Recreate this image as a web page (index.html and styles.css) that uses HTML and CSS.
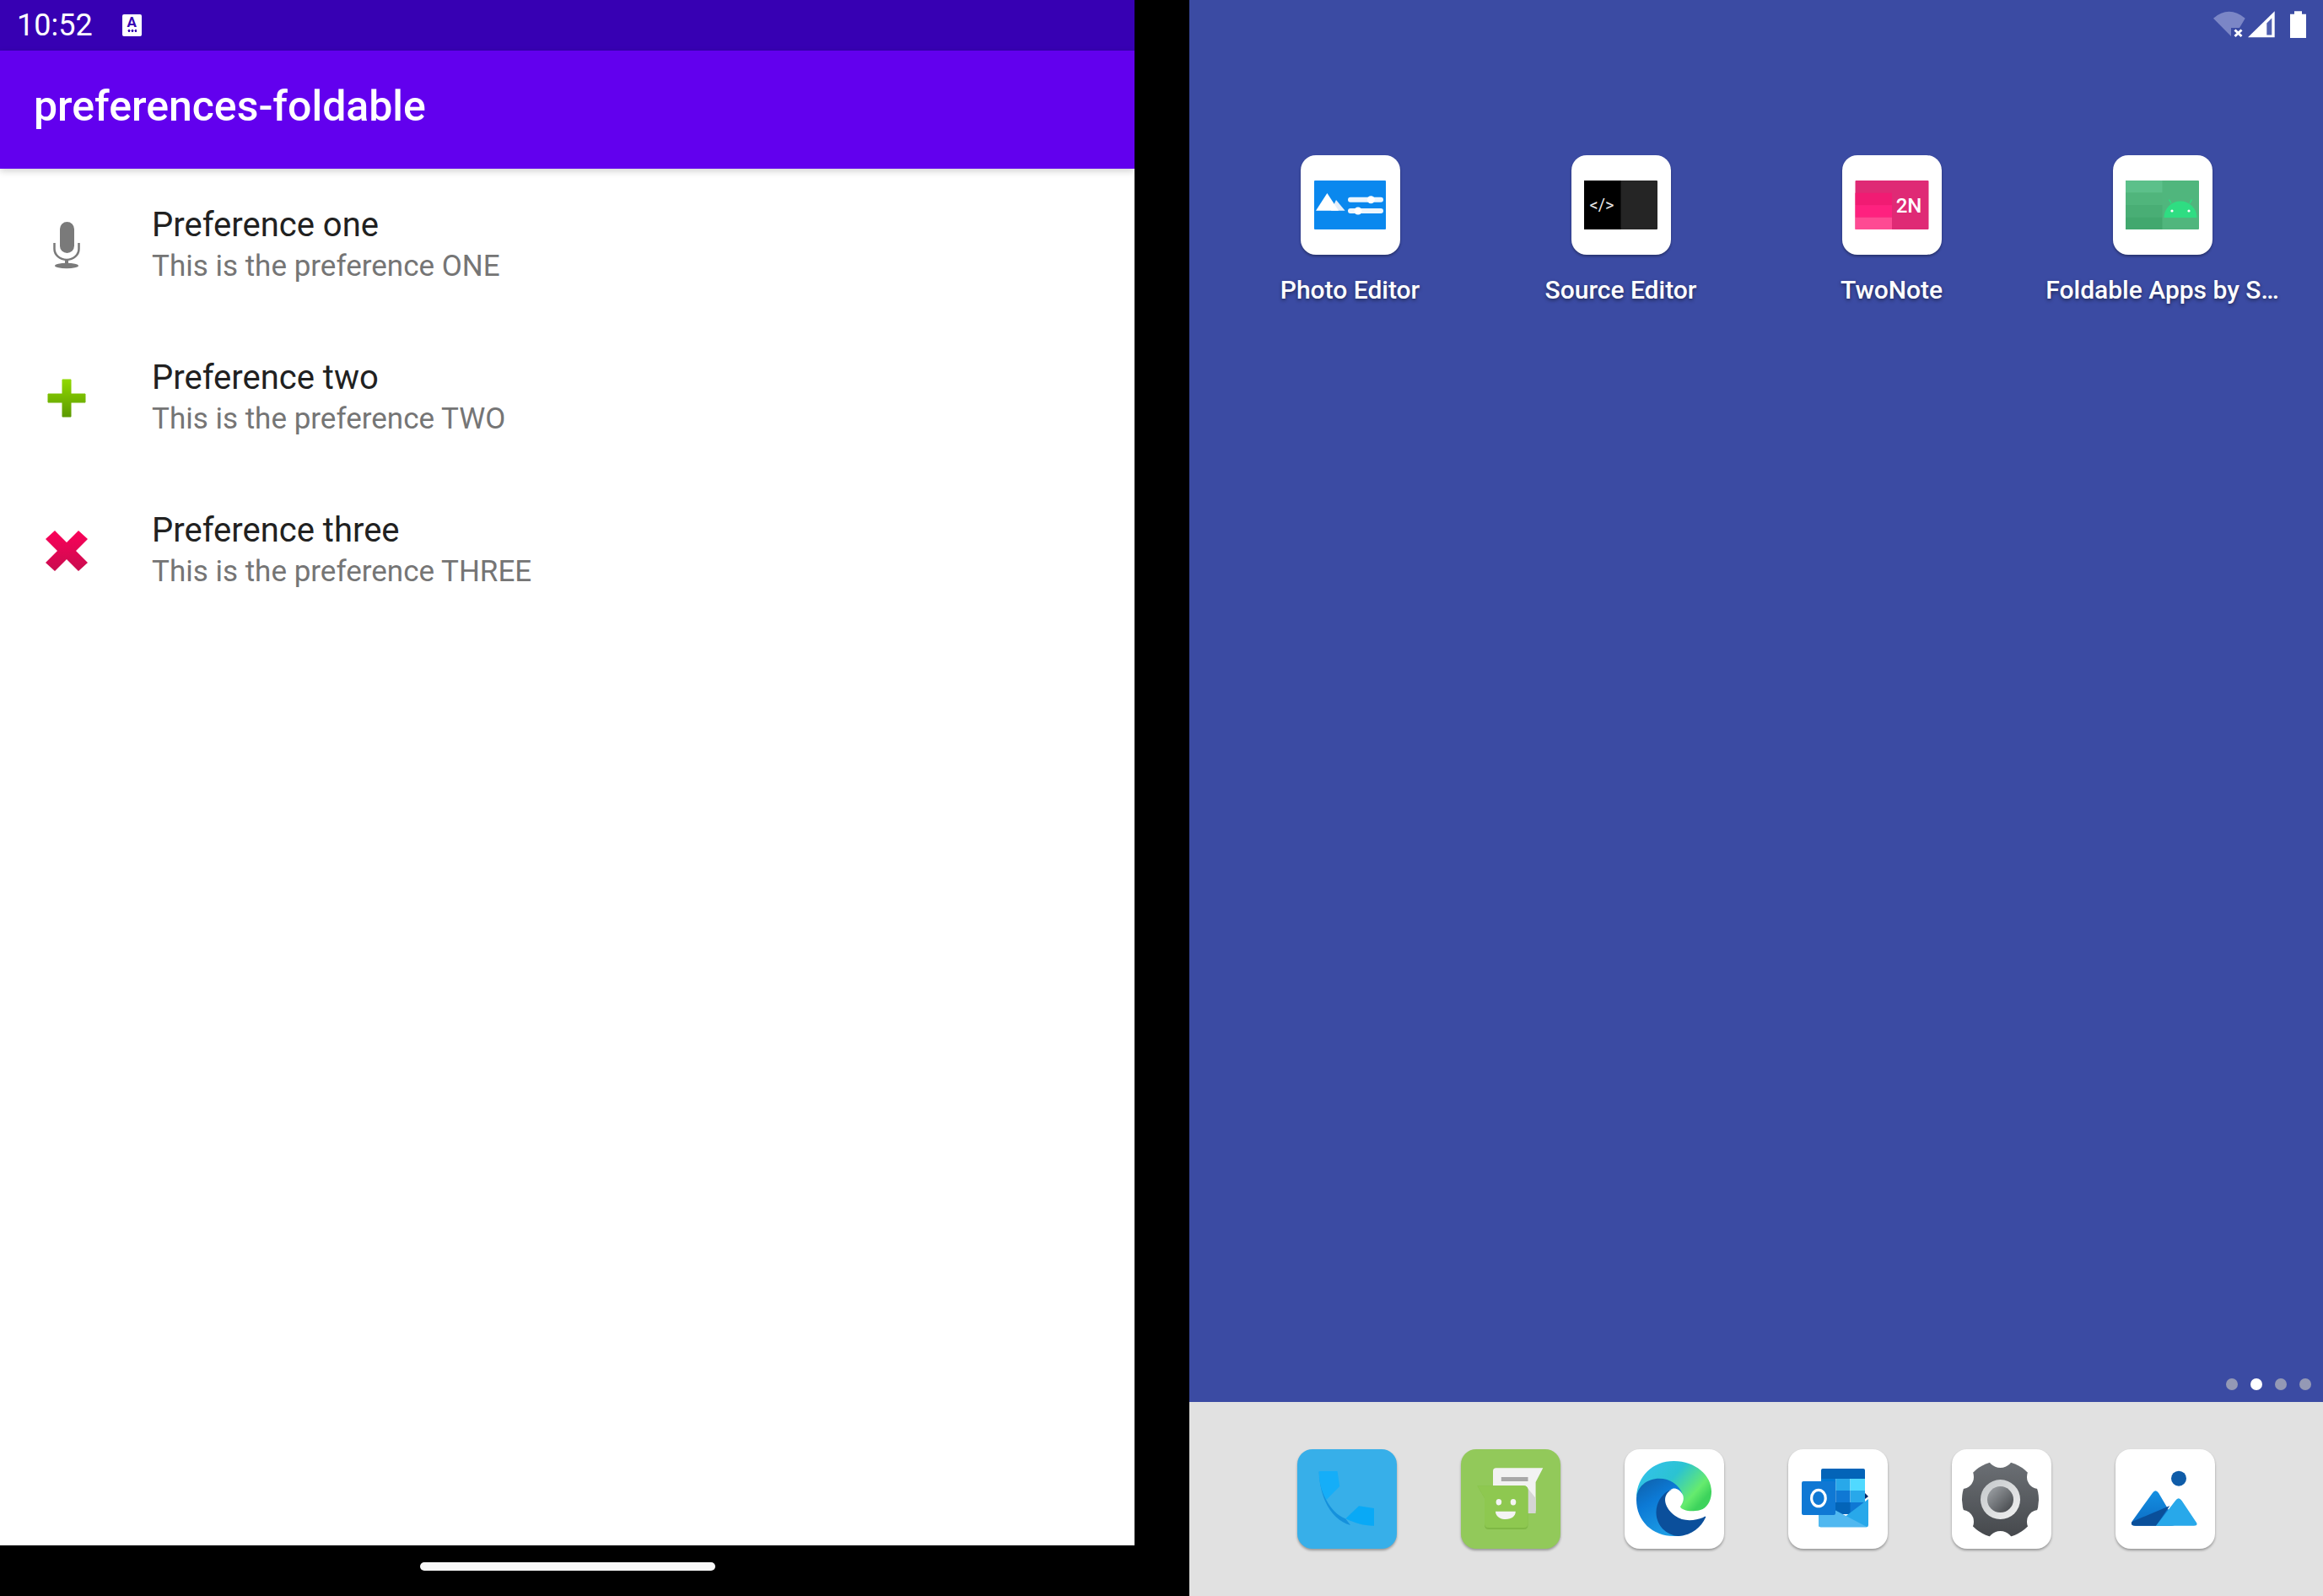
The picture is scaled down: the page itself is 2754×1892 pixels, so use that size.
FILE: index.html
```html
<!DOCTYPE html>
<html lang="en">
<head>
<meta charset="utf-8">
<title>preferences-foldable</title>
<link rel="stylesheet" href="styles.css">
</head>
<body>
<svg class="defs" width="0" height="0" aria-hidden="true">
  <defs>
    <linearGradient id="plusG" x1="0" y1="0" x2="0" y2="1"><stop offset="0" stop-color="#90d800"/><stop offset="1" stop-color="#5c9a00"/></linearGradient>
    <linearGradient id="crossG" x1="0" y1="0" x2="0" y2="1"><stop offset="0" stop-color="#fb0059"/><stop offset="1" stop-color="#c90d4f"/></linearGradient>
    <linearGradient id="edgeTop" x1="0" y1="0" x2="1" y2="0.6"><stop offset="0" stop-color="#35c1f1"/><stop offset=".5" stop-color="#2bc3d2"/><stop offset=".85" stop-color="#66eb6e"/><stop offset="1" stop-color="#3dd35c"/></linearGradient>
    <linearGradient id="edgeMid" x1="0" y1="0" x2=".5" y2="1"><stop offset="0" stop-color="#0f5fa8"/><stop offset=".45" stop-color="#0c7ad6"/><stop offset="1" stop-color="#1c9be4"/></linearGradient>
    <linearGradient id="gearG" x1="0" y1="0" x2="0" y2="1"><stop offset="0" stop-color="#6c7075"/><stop offset="1" stop-color="#45484c"/></linearGradient>
    <linearGradient id="ringG" x1="0" y1="0" x2="1" y2="1"><stop offset="0" stop-color="#c2c6c9"/><stop offset="1" stop-color="#f2f2f2"/></linearGradient>
    <linearGradient id="hubG" x1="0" y1="0" x2="1" y2="1"><stop offset="0" stop-color="#a2a6aa"/><stop offset="1" stop-color="#3f4246"/></linearGradient>
    <linearGradient id="mtG" x1="0" y1="0" x2="0" y2="1"><stop offset="0" stop-color="#1490e2"/><stop offset="1" stop-color="#0c6cc4"/></linearGradient>
  </defs>
</svg>
<main class="device">
  <section class="app">
    <header class="status-left">
      <span class="clock">10:52</span>
      <span class="ime"><span class="ime-a">A</span><span class="ime-dots"></span></span>
    </header>
    <div class="appbar">preferences-foldable</div>
    <ul class="prefs">
      <li class="pref">
        <span class="pref-icon">
          <svg width="60" height="60" viewBox="0 0 60 60"><rect x="22" y="2" width="17" height="37" rx="8.5" fill="#7a7a7a"/><path d="M15.500 27v7a14.500 13 0 0 0 29 0v-7" fill="none" stroke="#7a7a7a" stroke-width="2.500"/><rect x="28" y="46" width="4" height="7" fill="#7a7a7a"/><ellipse cx="30" cy="54" rx="14" ry="3.200" fill="#7a7a7a"/></svg>
        </span>
        <div class="pref-text"><div class="pref-title">Preference one</div><div class="pref-sub">This is the preference ONE</div></div>
      </li>
      <li class="pref">
        <span class="pref-icon">
          <svg width="60" height="60" viewBox="0 0 60 60"><path d="M25 8h10v17h17v10H35v17H25V35H8V25h17z" fill="url(#plusG)" stroke="url(#plusG)" stroke-width="1" stroke-linejoin="round"/></svg>
        </span>
        <div class="pref-text"><div class="pref-title">Preference two</div><div class="pref-sub">This is the preference TWO</div></div>
      </li>
      <li class="pref">
        <span class="pref-icon">
          <svg width="60" height="60" viewBox="0 0 60 60"><path d="M16 6L30 20 44 6l11 10-14 14 14 14-11 10-14-14-14 14L5 44l14-14L5 16z" fill="url(#crossG)"/></svg>
        </span>
        <div class="pref-text"><div class="pref-title">Preference three</div><div class="pref-sub">This is the preference THREE</div></div>
      </li>
    </ul>
    <footer class="navbar"><span class="handle"></span></footer>
  </section>

  <div class="hinge"></div>

  <section class="launcher">
    <div class="status-right">
      <svg width="120" height="40" viewBox="0 0 120 40">
        <path d="M4 11.700Q22.500-4 41.700 11.700L35 23H25v10z" fill="#7b86c6"/>
        <path d="M29.500 25.500l8 7.500m0-7.500l-8 7.500" stroke="#fff" stroke-width="3"/>
        <path d="M45 34.300L76.700 3.300v31z" fill="#fff"/>
        <path d="M67.300 17.500l6-6v20h-6z" fill="#4f5fb0"/>
        <path d="M100 3.300h9v3.400h5V35H95V6.700h5z" fill="#fff"/>
      </svg>
    </div>

    <div class="apps">
      <div class="app-cell">
        <span class="tile white">
          <svg width="118" height="118" viewBox="0 0 118 118">
            <rect x="16" y="30" width="85" height="58" rx="1" fill="#0a88ee"/>
            <path d="M42 53l10.600 12.700H36z" fill="#e4eefa"/>
            <path d="M18 65.700L31.400 45 45 65.700z" fill="#fff"/>
            <path d="M59 52.700h36M59 66h36" stroke="#fff" stroke-width="6" stroke-linecap="round" opacity=".92"/>
            <circle cx="83.300" cy="52.700" r="4.500" fill="#fff"/><circle cx="68" cy="66" r="4.500" fill="#fff"/>
          </svg>
        </span>
        <span class="app-label">Photo Editor</span>
      </div>
      <div class="app-cell">
        <span class="tile white">
          <svg width="118" height="118" viewBox="0 0 118 118">
            <rect x="15" y="30" width="87" height="58" rx="1" fill="#252525"/>
            <path d="M15 30h43.500v58H15z" fill="#000"/>
            <text class="glyph-code" x="36" y="66" text-anchor="middle">&lt;/&gt;</text>
          </svg>
        </span>
        <span class="app-label">Source Editor</span>
      </div>
      <div class="app-cell">
        <span class="tile white">
          <svg width="118" height="118" viewBox="0 0 118 118">
            <rect x="15.500" y="30" width="87" height="58" rx="1" fill="#df2a75"/>
            <rect x="15.500" y="44.700" width="43.500" height="14.500" fill="#f11b73"/>
            <rect x="15.500" y="59.200" width="43.500" height="14.500" fill="#fe217f"/>
            <rect x="15.500" y="73.700" width="43.500" height="14.300" fill="#fe4a93"/>
            <text class="glyph-2n" x="79" y="67.500" text-anchor="middle">2N</text>
          </svg>
        </span>
        <span class="app-label">TwoNote</span>
      </div>
      <div class="app-cell">
        <span class="tile white">
          <svg width="118" height="118" viewBox="0 0 118 118">
            <rect x="15" y="30" width="87" height="58" rx="1" fill="#50b67d"/>
            <rect x="15" y="30" width="43.500" height="14.500" fill="#5cc08a"/>
            <rect x="15" y="44.500" width="43.500" height="14.500" fill="#50b57c"/>
            <rect x="15" y="59" width="43.500" height="14.500" fill="#49ae75"/>
            <rect x="15" y="73.500" width="43.500" height="14.500" fill="#42a86e"/>
            <path d="M60.500 74a19.500 19.500 0 0 1 39 0z" fill="#2fdd82"/>
            <path d="M69 57l-2.500-4.500M91 57l2.500-4.500" stroke="#2fdd82" stroke-width="1.500"/>
            <circle cx="70" cy="66" r="1.600" fill="#fff"/><circle cx="90" cy="66" r="1.600" fill="#fff"/>
          </svg>
        </span>
        <span class="app-label">Foldable Apps by S…</span>
      </div>
    </div>

    <div class="pager">
      <span class="dot"></span><span class="dot on"></span><span class="dot"></span><span class="dot"></span>
    </div>

    <nav class="dock">
      <span class="tile blue">
        <svg width="118" height="118" viewBox="0 0 118 118">
          <path d="M34.400 60L57.300 82.300 73 67.300 50 44z" fill="none"/>
          <path d="M34 59.500C40 71 47 78 57.300 82.500L63 90C44 85 27 64 25.700 26z" fill="#1591dc"/>
          <path d="M25.700 27Q25.700 26 27 26H47.500L50.200 44 34.400 60C28 49 25.700 38 25.700 27z" fill="#15aef8"/>
          <path d="M57.300 82.300L73 67.300 91 70V90.700C80 91 69 88 57.300 82.300z" fill="#09a9f6"/>
        </svg>
      </span>
      <span class="tile green">
        <svg width="118" height="118" viewBox="0 0 118 118">
          <path d="M38 26q0-3.700 3.700-3.700H97.300L88.600 39V72q0 4-4 4H38z" fill="#f2f2f2"/>
          <rect x="47.800" y="33" width="31.700" height="5" fill="#a8a8a8"/>
          <path d="M76.800 43.300L88.600 58V76H79.500V49z" fill="#d5d5d5"/>
          <path d="M19.400 43.300H74q5.500 0 5.500 5.500V90q0 5-5 5H33q-5 0-5-5V58z" fill="#7fb845"/>
          <path d="M19.400 43.300H74q5.500 0 5.500 5.500V88q0 5-5 5H33q-5 0-5-5V58z" fill="#8ec850"/>
          <ellipse cx="44.900" cy="62.700" rx="3.300" ry="3.700" fill="#f4f4f4"/><ellipse cx="62" cy="62.700" rx="3.300" ry="3.700" fill="#f4f4f4"/>
          <path d="M41 73.700H64.800C64.800 79 60 83 53 83S41 79 41 73.700z" fill="#f4f4f4"/>
        </svg>
      </span>
      <span class="tile white">
        <svg width="118" height="118" viewBox="0 0 118 118">
          <path d="M14 57C15 32 33 14 58.500 14 84 14 103 31 103 50 103 63 96 73 84 73 76 74 67 72 66 68 69 64 71 59 69 54 65 45 55 43 46 46 30 42 17 46 14 57z" fill="url(#edgeTop)"/>
          <path d="M14 60C14 44 27 34.700 41 34.700 54 34.700 65 42 69 54 66 48 61 46 57.600 46.600 48 50 43 60 45 72 47 86 57 98 70 102 66 103 62 103 58.500 103 33 103 14 85 14 60z" fill="url(#edgeMid)"/>
          <path d="M57.600 47C47 50 37 61 37.500 76 38 90 49 102 64 103 80 102 91 92 96 81 97 79 95 79.500 93 81 83 85 69 86 60 79 50 72 45 61 50 53 52 50 55 48 57.600 47z" fill="#0b4f9b"/>
        </svg>
      </span>
      <span class="tile white">
        <svg width="118" height="118" viewBox="0 0 118 118">
          <path d="M39 25q0-2 2-2h48q2 0 2 2v10H39z" fill="#0364b8"/>
          <rect x="39" y="35" width="17.500" height="14" fill="#0078d4"/><rect x="56.500" y="35" width="17" height="14" fill="#28a8ea"/><rect x="73.500" y="35" width="17.500" height="14" fill="#50d9ff"/>
          <rect x="39" y="49" width="17.500" height="14" fill="#0364b8"/><rect x="56.500" y="49" width="17" height="14" fill="#0f78d4"/><rect x="73.500" y="49" width="17.500" height="14" fill="#28a8ea"/>
          <rect x="39" y="63" width="35" height="14" fill="#0364b8"/><path d="M73.500 63H91V70L73.500 79z" fill="#0f78d4"/>
          <path d="M91 52l4 4-4 3z" fill="#0a2767"/>
          <path d="M36 62L66 81 95 59V90q0 2.300-2.300 2.300H38.300Q36 92.300 36 90z" fill="#28a8ea"/>
          <path d="M36 62L93.700 92.300H38.300Q36 92.300 36 90z" fill="#50b8f0"/>
          <rect x="16" y="38" width="40" height="40" rx="2" fill="#0f78d4"/>
          <ellipse cx="35.900" cy="58" rx="8.300" ry="9.700" fill="none" stroke="#fff" stroke-width="3.200"/>
        </svg>
      </span>
      <span class="tile white">
        <svg width="118" height="118" viewBox="0 0 118 118">
          <circle cx="57.500" cy="59.600" r="45.500" fill="url(#gearG)"/>
          <circle cx="57.500" cy="6" r="16" fill="#fff"/><circle cx="57.500" cy="113" r="16" fill="#fff"/>
          <circle cx="103" cy="33" r="14" fill="#fff"/><circle cx="12" cy="33" r="14" fill="#fff"/>
          <circle cx="103" cy="86" r="14" fill="#fff"/><circle cx="12" cy="86" r="14" fill="#fff"/>
          <circle cx="57.500" cy="59.600" r="23.500" fill="url(#ringG)"/>
          <circle cx="57.500" cy="59.600" r="15.500" fill="url(#hubG)"/>
        </svg>
      </span>
      <span class="tile white">
        <svg width="118" height="118" viewBox="0 0 118 118">
          <circle cx="75" cy="34.700" r="9" fill="#0f5ca8"/>
          <path d="M43.800 52Q47.500 46.500 51.200 52L70 84Q74 90.700 66 90.700H24Q17 90.700 20 85z" fill="url(#mtG)"/>
          <path d="M21 90.400C18 89.500 18.800 87 19.500 86L64.400 67 48 90.700H24z" fill="#0a4f9a"/>
          <path d="M71 61Q74.800 55.500 78.600 61L96 87Q98 90.700 93 90.700H48z" fill="#28a8ea"/>
        </svg>
      </span>
    </nav>
  </section>
</main>
</body>
</html>
```

FILE: styles.css
```css
* { box-sizing: border-box; }
html, body { margin: 0; padding: 0; }
body { font-family: Roboto, "Noto Sans", sans-serif; background: #000; }
.defs { display: block; height: 0; }

.device {
  display: grid;
  grid-template-columns: 1345px 65px 1344px;
  width: 2754px;
  height: 1892px;
  overflow: hidden;
}

/* left screen */
.app { display: flex; flex-direction: column; height: 1892px; }
.status-left {
  display: flex;
  align-items: center;
  gap: 35px;
  height: 60px;
  padding-left: 20px;
  background: #3700b3;
  color: #fff;
}
.clock { font-size: 36px; line-height: 60px; }
.ime {
  display: flex;
  flex-direction: column;
  align-items: center;
  width: 23px;
  height: 26px;
  border-radius: 2px;
  background: #fff;
}
.ime-a { font-size: 17px; font-weight: 700; line-height: 18px; color: #3700b3; }
.ime-dots { width: 11px; height: 3px; background: radial-gradient(circle at center, #3700b3 1.4px, transparent 1.6px) 0 0 / 4px 3px; }
.appbar {
  position: relative;
  z-index: 1;
  height: 140px;
  padding-left: 40px;
  background: #6200ee;
  color: #fff;
  font-size: 50px;
  font-weight: 500;
  line-height: 132px;
  box-shadow: 0 3px 8px rgba(0, 0, 0, .18);
}
.prefs { flex: 1; margin: 0; padding: 0; list-style: none; background: #fff; }
.pref { display: flex; align-items: center; height: 181px; }
.pref-icon { display: flex; justify-content: center; width: 180px; padding-right: 22px; }
.pref-text { display: flex; flex-direction: column; }
.pref-title { font-size: 40px; line-height: 50px; color: #212121; }
.pref-sub { font-size: 35px; line-height: 48px; color: #757575; }
.navbar { display: flex; justify-content: center; align-items: center; height: 60px; padding-bottom: 10px; background: #000; }
.handle { display: block; width: 350px; height: 10px; border-radius: 5px; background: #f8f8f8; }
.hinge { background: #000; }

/* right screen */
.launcher { display: flex; flex-direction: column; height: 1892px; background: #3b4ba3; }
.status-right { display: flex; justify-content: flex-end; height: 60px; padding: 10px 14px 0 0; }
.apps { display: grid; grid-template-columns: repeat(4, 321px); padding: 124px 30px 0; }
.app-cell { display: flex; flex-direction: column; align-items: center; gap: 22px; }
.app-label {
  color: #fff;
  font-size: 30px;
  font-weight: 500;
  line-height: 40px;
  white-space: nowrap;
  text-shadow: 0 2px 4px rgba(0, 0, 0, .45);
}
.tile {
  display: block;
  width: 118px;
  height: 118px;
  border-radius: 18px;
  box-shadow: 0 2px 3px rgba(0, 0, 0, .32);
}
.tile svg { display: block; }
.white { background: #fff; }
.blue { background: #37afe9; }
.green { background: #92c95a; }
.glyph-code { font-family: Roboto, sans-serif; font-size: 20px; fill: #e6e6e6; }
.glyph-2n { font-family: Roboto, sans-serif; font-size: 24px; font-weight: 500; fill: #fff; }

.pager { display: flex; justify-content: flex-end; gap: 15px; margin-top: auto; padding: 0 14px 14px 0; }
.dot { display: block; width: 14px; height: 14px; border-radius: 50%; background: #9499b5; }
.dot.on { background: #fff; }
.dock {
  display: grid;
  grid-template-columns: repeat(6, 194.2px);
  justify-items: center;
  justify-content: center;
  height: 230px;
  padding-top: 56px;
  background: #e1e1e1;
}
```
